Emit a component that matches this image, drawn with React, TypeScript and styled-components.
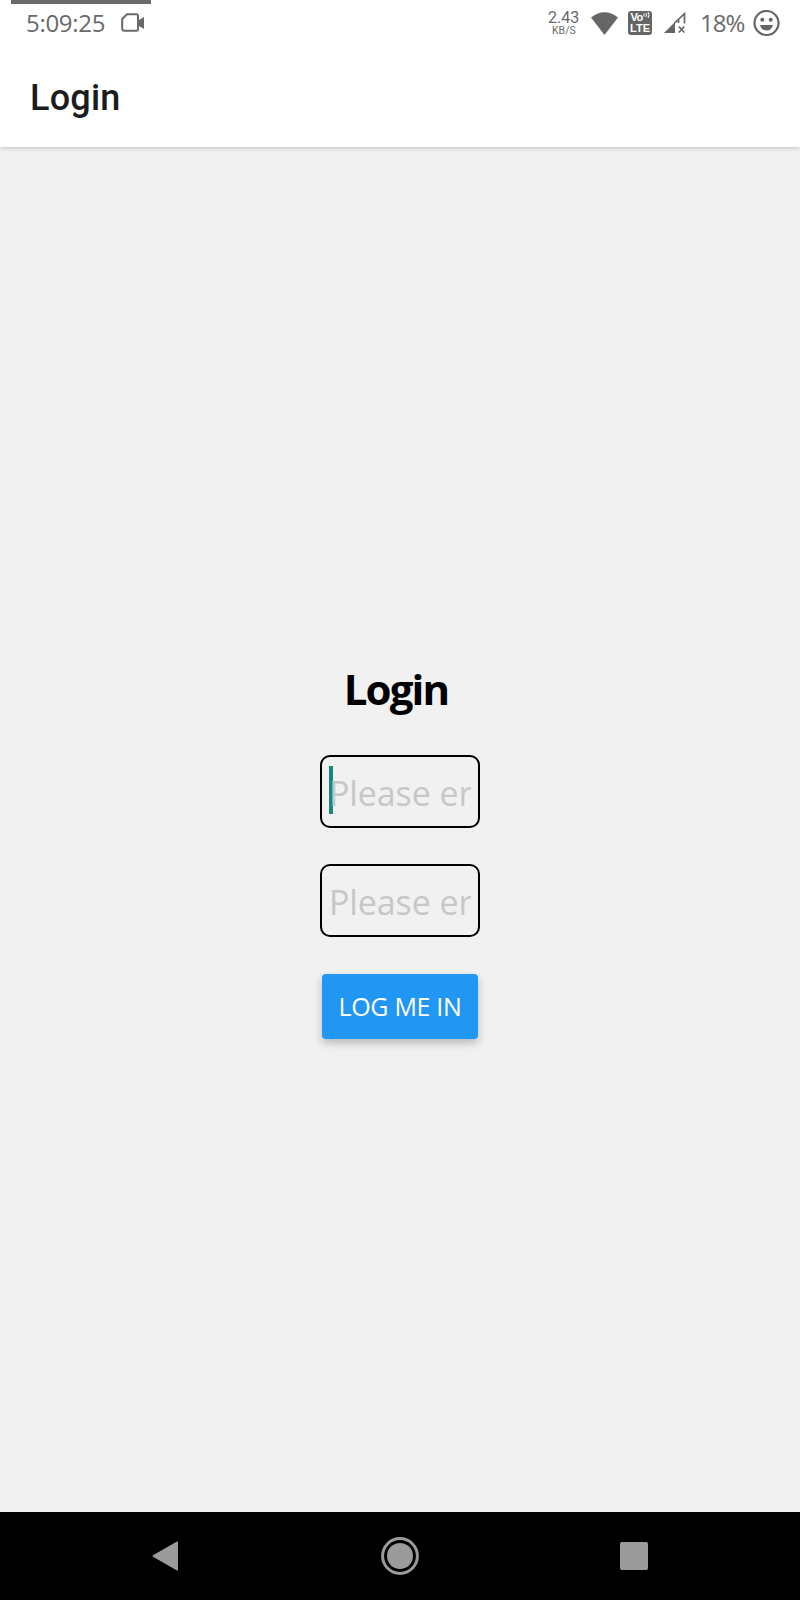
import React from "react";
import styled, { createGlobalStyle } from "styled-components";

const GlobalStyle = createGlobalStyle`
  * { box-sizing: border-box; }
  body { margin: 0; background: #f1f1f1; }
`;

const hand = `"Open Sans", "Noto Sans", sans-serif`;

const Screen = styled.div`
  width: 800px;
  height: 1600px;
  display: flex;
  flex-direction: column;
  background: #f1f1f1;
  overflow: hidden;
  font-family: ${hand};
`;

const TopArea = styled.header`
  height: 147px;
  flex: none;
  background: #fff;
  box-shadow: 0 1px 5px rgba(0, 0, 0, 0.2);
`;

const RecordingStrip = styled.div`
  width: 140px;
  height: 4px;
  margin-left: 11px;
  background: #6a6a6a;
`;

const StatusBar = styled.div`
  height: 38px;
  display: flex;
  align-items: center;
  justify-content: space-between;
  padding: 0 20px 0 26px;
  color: #6a6a6a;
`;

const StatusGroup = styled.div`
  display: flex;
  align-items: center;
  height: 38px;
  svg { display: block; flex: none; }
`;

const Clock = styled.span`
  width: 95px;
  font-size: 24px;
  line-height: 36px;
  letter-spacing: -0.3px;
  white-space: nowrap;
`;

const Speed = styled.div`
  width: 43px;
  display: flex;
  flex-direction: column;
  align-items: flex-start;
  white-space: nowrap;
`;

const SpeedValue = styled.span`
  font: 16px/15px Roboto, sans-serif;
`;

const SpeedUnit = styled.span`
  font: 10.5px/12px Roboto, sans-serif;
  padding-left: 4px;
`;

const Battery = styled.span`
  width: 53px;
  margin-left: 14px;
  font-size: 24px;
  line-height: 38px;
  letter-spacing: -1px;
  white-space: nowrap;
`;

const HeaderTitle = styled.h1`
  margin: 31px 0 0 30px;
  font: 500 36px/50px Roboto, sans-serif;
  letter-spacing: 0.2px;
  color: #1c1c1e;
`;

const Content = styled.main`
  flex: 1;
  display: flex;
  flex-direction: column;
  align-items: center;
  padding-top: 510px;
`;

const FormTitle = styled.h2`
  margin: 0 8px 34px 0;
  height: 64px;
  font: 700 42px/64px ${hand};
  letter-spacing: -1.9px;
  color: #000;
`;

const Field = styled.div`
  display: flex;
  align-items: center;
  width: 160px;
  height: 73px;
  margin-bottom: 36px;
  padding: 0 7px;
  border: 2px solid #000;
  border-radius: 10px;
`;

const Caret = styled.span`
  flex: none;
  width: 4px;
  height: 48px;
  margin: 0 -4px 3px 0;
  background: #15897b;
`;

const Placeholder = styled.span`
  overflow: hidden;
  white-space: nowrap;
  font-size: 34px;
  line-height: 56px;
  letter-spacing: -0.1px;
  color: #c7c7c7;
  padding-top: 3px;
`;

const Submit = styled.button`
  width: 156px;
  height: 65px;
  margin-top: 1px;
  padding: 0;
  border: 0;
  border-radius: 4px;
  background: #2196f3;
  color: #fff;
  font: 400 25px/65px ${hand};
  letter-spacing: -0.3px;
  white-space: nowrap;
  box-shadow: 0 4px 9px rgba(0, 0, 0, 0.24);
`;

const NavBar = styled.nav`
  height: 88px;
  flex: none;
  display: flex;
  align-items: center;
  justify-content: space-between;
  padding: 0 152px;
  background: #000;
  svg { display: block; }
`;

const CameraIcon = () => (
  <svg width="24" height="20" viewBox="0 0 24 20">
    <path d="M6 1.2h9.5Q17 1.2 17 2.7v13.6q0 1.5-1.5 1.5H3.2Q1.2 17.8 1.2 15.8V6Z" fill="none" stroke="#6a6a6a" strokeWidth="2" strokeLinejoin="round" />
    <path d="M17 7.5 23 4v12l-6-3.5Z" fill="#6a6a6a" />
  </svg>
);

const WifiIcon = () => (
  <svg width="27" height="23" viewBox="0 0 27 23">
    <path d="M0 5.5Q13.5-5 27 5.5L13.5 23Z" fill="#666" />
  </svg>
);

const VolteBadge = styled.div`
  width: 24px;
  height: 24px;
  margin: 0 12px 0 10px;
  border-radius: 3px;
  background: #666;
  color: #fff;
  font: 700 11px/11px "Liberation Sans", sans-serif;
  display: flex;
  flex-direction: column;
  align-items: center;
  justify-content: center;
`;

const VolteTop = styled.span`
  display: flex;
  letter-spacing: -0.5px;
`;

const SignalIcon = () => (
  <svg width="22" height="22" viewBox="0 0 22 22">
    <path d="M0 21 11 10v11Z" fill="#666" />
    <path d="M10.5 11 20.5 1.7V11.5M14.5 7v4M14.8 14.5l5.5 6M20.3 14.5l-5.5 6" fill="none" stroke="#666" strokeWidth="1.7" />
  </svg>
);

const SmileIcon = () => (
  <svg width="27" height="27" viewBox="0 0 27 27">
    <circle cx="13.5" cy="13" r="12" fill="none" stroke="#666" strokeWidth="2.2" />
    <circle cx="9.3" cy="9.7" r="2" fill="#666" />
    <circle cx="17.7" cy="9.7" r="2" fill="#666" />
    <path d="M7 15h13Q18.5 20.5 13.5 20.5T7 15Z" fill="#666" />
  </svg>
);

export default function App() {
  return (
    <Screen>
      <GlobalStyle />
      <TopArea>
        <RecordingStrip />
        <StatusBar>
          <StatusGroup>
            <Clock>5:09:25</Clock>
            <CameraIcon />
          </StatusGroup>
          <StatusGroup>
            <Speed>
              <SpeedValue>2.43</SpeedValue>
              <SpeedUnit>KB/S</SpeedUnit>
            </Speed>
            <WifiIcon />
            <VolteBadge>
              <VolteTop>Vo<svg width="7" height="8" viewBox="0 0 7 8"><path d="M1 1.5v3M3 1q1 2 0 4M5 0q2 3 0 6" fill="none" stroke="#fff" strokeWidth="1" /></svg></VolteTop>
              <span>LTE</span>
            </VolteBadge>
            <SignalIcon />
            <Battery>18%</Battery>
            <SmileIcon />
          </StatusGroup>
        </StatusBar>
        <HeaderTitle>Login</HeaderTitle>
      </TopArea>
      <Content>
        <FormTitle>Login</FormTitle>
        <Field>
          <Caret />
          <Placeholder>Please er</Placeholder>
        </Field>
        <Field>
          <Placeholder>Please er</Placeholder>
        </Field>
        <Submit>LOG ME IN</Submit>
      </Content>
      <NavBar>
        <svg width="27" height="30" viewBox="0 0 27 30">
          <path d="M1.5 15 25 1.5v27Z" fill="#9b9b9b" stroke="#9b9b9b" strokeWidth="2" strokeLinejoin="round" />
        </svg>
        <svg width="38" height="38" viewBox="0 0 38 38">
          <circle cx="19" cy="19" r="17.4" fill="none" stroke="#9b9b9b" strokeWidth="3" />
          <circle cx="19" cy="19" r="13" fill="#9b9b9b" />
        </svg>
        <svg width="28" height="28" viewBox="0 0 28 28">
          <rect width="28" height="28" rx="2" fill="#9b9b9b" />
        </svg>
      </NavBar>
    </Screen>
  );
}
